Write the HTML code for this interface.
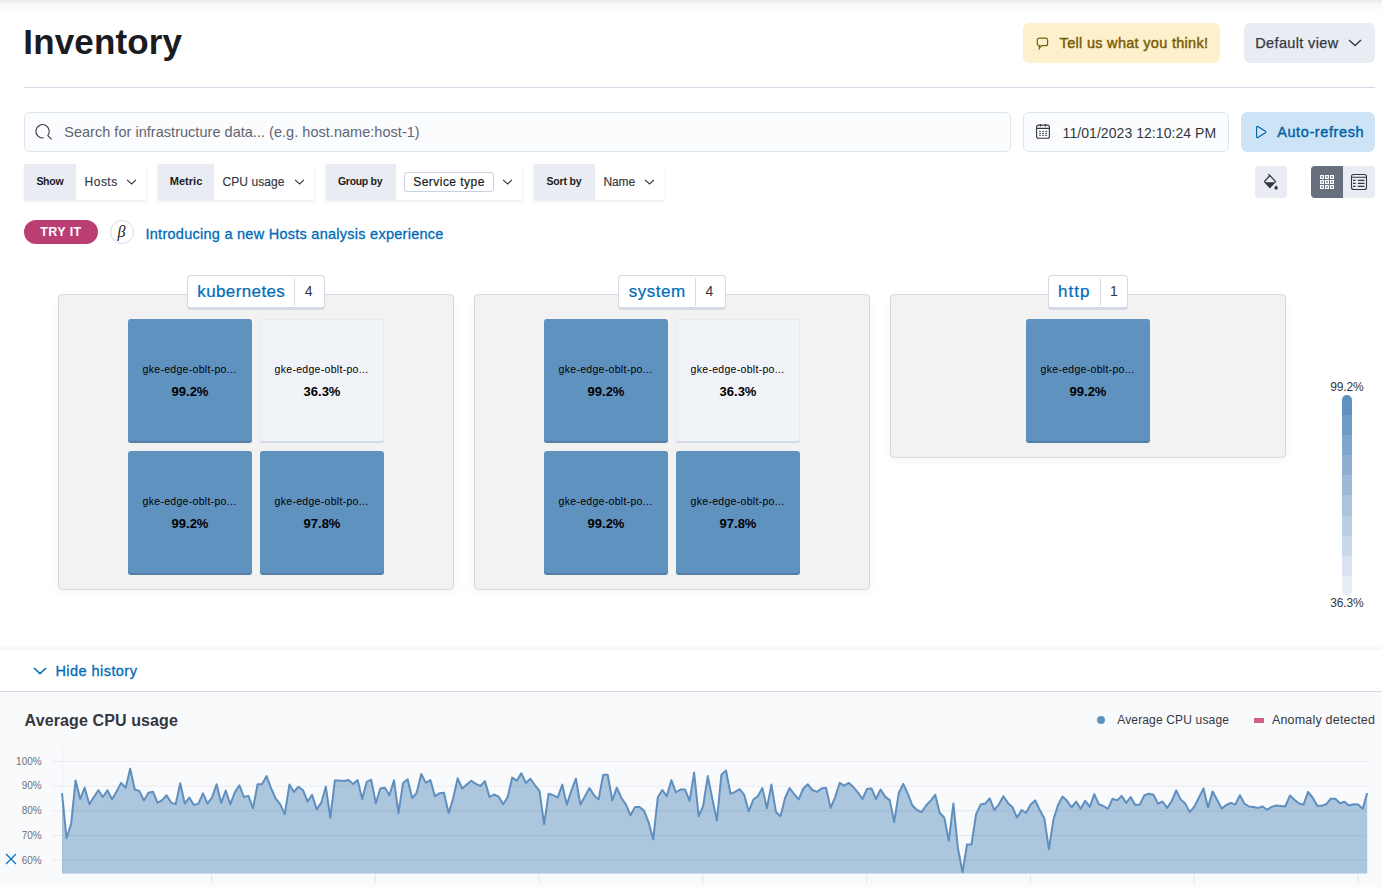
<!DOCTYPE html>
<html><head><meta charset="utf-8">
<style>
*{box-sizing:border-box;margin:0;padding:0}
html,body{width:1382px;height:887px;overflow:hidden;background:#fff;font-family:"Liberation Sans",sans-serif;color:#343741}
.a{position:absolute}
.t{position:absolute;white-space:nowrap;line-height:1}
svg{position:absolute;overflow:visible}
.fg{position:absolute;top:164px;height:36px;background:#fff;box-shadow:0 1px 2px rgba(120,130,160,0.14),0 2px 5px rgba(120,130,160,0.06)}
.fg .lab{position:absolute;left:0;top:0;height:36px;background:#E9EDF3}
.grp{position:absolute;top:294px;width:396px;background:#F2F2F2;border:1px solid #D3DAE6;border-radius:4px;box-shadow:0 3px 10px rgba(0,0,0,0.045)}
.gl{position:absolute;top:275px;height:35px;background:#fff;border:1px solid #D3DAE6;border-bottom:3px solid #D3DAE6;border-radius:4px}
.gl .dv{position:absolute;top:2px;width:1px;height:28px;background:#D3DAE6}
.tile{position:absolute;width:124px;height:124px;background:#6092C0;border-radius:3px;box-shadow:inset 0 -2px 0 rgba(0,0,0,0.13)}
.tile.l{background:#F0F3F8;box-shadow:inset 0 0 0 1px rgba(211,218,230,0.35),inset 0 -2px 0 #D3DCE8}
</style></head><body>
<div class="a" style="left:0;top:0;width:1382px;height:13px;background:linear-gradient(#E9E9E9 0px,#F4F4F4 2.5px,#F9F9F9 5px,#FCFCFC 8px,#FFFFFF 13px)"></div>
<div class="a" style="left:24px;top:87px;width:1351px;height:1px;background:#D3DAE6"></div>

<!-- Tell us -->
<div class="a" style="left:1023px;top:23px;width:197px;height:40px;background:#FDF1CD;border-radius:6px"></div>
<svg style="left:1036px;top:37px" width="14" height="13" viewBox="0 0 14 13"><path d="M3.2 1.1h6.4a2 2 0 0 1 2 2v3.6a2 2 0 0 1-2 2H5.3L3.3 11.6V8.7a2 2 0 0 1-2-2V3.1a2 2 0 0 1 2-2z" fill="none" stroke="#7C5E05" stroke-width="1.2"/></svg>

<!-- Default view -->
<div class="a" style="left:1244px;top:23px;width:131px;height:40px;background:#E9EDF3;border-radius:6px"></div>
<svg style="left:1348px;top:39px" width="14" height="8" viewBox="0 0 14 8"><path d="M1 1l6 5.6L13 1" fill="none" stroke="#343741" stroke-width="1.3"/></svg>

<!-- search -->
<div class="a" style="left:24px;top:112px;width:987px;height:40px;background:#FBFCFD;border:1px solid #DFE4EE;border-radius:6px"></div>
<svg style="left:35px;top:123px" width="18" height="18" viewBox="0 0 18 18"><path d="M8.6 14.9A6.7 6.7 0 1 1 12.7 12.6" fill="none" stroke="#343741" stroke-width="1.1"/><path d="M12.6 12.4l4 4" fill="none" stroke="#343741" stroke-width="1.1"/></svg>

<!-- date -->
<div class="a" style="left:1023px;top:112px;width:206px;height:40px;background:#FBFCFD;border:1px solid #DFE4EE;border-radius:6px"></div>
<svg style="left:1036px;top:123px" width="14" height="16" viewBox="0 0 14 16"><rect x="0.6" y="2.1" width="12.8" height="13.2" rx="2" fill="none" stroke="#343741" stroke-width="1.1"/><path d="M0.6 5.4h12.8M4.4 1v2.6M9.5 1v2.6" stroke="#343741" stroke-width="1.1"/><g fill="#343741"><rect x="3.2" y="7.9" width="1.6" height="1"/><rect x="6.2" y="7.9" width="1.6" height="1"/><rect x="9.2" y="7.9" width="1.6" height="1"/><rect x="3.2" y="9.9" width="1.6" height="1"/><rect x="6.2" y="9.9" width="1.6" height="1"/><rect x="9.2" y="9.9" width="1.6" height="1"/><rect x="3.2" y="11.9" width="1.6" height="1"/><rect x="6.2" y="11.9" width="1.6" height="1"/><rect x="9.2" y="11.9" width="1.6" height="1"/></g></svg>

<!-- auto refresh -->
<div class="a" style="left:1241px;top:112px;width:134px;height:40px;background:#CCE4F5;border-radius:6px"></div>
<svg style="left:1255px;top:125px" width="12" height="14" viewBox="0 0 12 14"><path d="M1.6 2.2v9.6a0.8 0.8 0 0 0 1.2 0.7l7.6-4.8a0.8 0.8 0 0 0 0-1.4L2.8 1.5a0.8 0.8 0 0 0-1.2 0.7z" fill="none" stroke="#0061A6" stroke-width="1.1"/></svg>

<!-- filter groups -->
<div class="fg" style="left:24px;width:122px"><div class="lab" style="width:52px"></div></div>
<svg style="left:126px;top:179px" width="11" height="6" viewBox="0 0 11 6"><path d="M1 0.8l4.6 4.2L10 0.8" fill="none" stroke="#343741" stroke-width="1.1"/></svg>
<div class="fg" style="left:158px;width:156px"><div class="lab" style="width:56px"></div></div>
<svg style="left:294px;top:179px" width="11" height="6" viewBox="0 0 11 6"><path d="M1 0.8l4.6 4.2L10 0.8" fill="none" stroke="#343741" stroke-width="1.1"/></svg>
<div class="fg" style="left:326px;width:196px"><div class="lab" style="width:70px"></div></div>
<div class="a" style="left:404px;top:172px;width:90px;height:20px;border:1px solid #C9D1E0;border-radius:3px;background:#fff"></div>
<svg style="left:502px;top:179px" width="11" height="6" viewBox="0 0 11 6"><path d="M1 0.8l4.6 4.2L10 0.8" fill="none" stroke="#343741" stroke-width="1.1"/></svg>
<div class="fg" style="left:534px;width:130px"><div class="lab" style="width:61px"></div></div>
<svg style="left:644px;top:179px" width="11" height="6" viewBox="0 0 11 6"><path d="M1 0.8l4.6 4.2L10 0.8" fill="none" stroke="#343741" stroke-width="1.1"/></svg>

<!-- paint & toggle -->
<div class="a" style="left:1255px;top:166px;width:32px;height:32px;background:#E9EDF3;border-radius:4px"></div>
<svg style="left:1255px;top:166px" width="32" height="32" viewBox="0 0 32 32"><path d="M13.3 8.2l1.5 1.5" stroke="#343741" stroke-width="1.2"/><path d="M14.8 9.5L9.4 15.6 14.9 21.6 20.6 15.6z" fill="none" stroke="#343741" stroke-width="1.2"/><path d="M9.6 16.2h10.6L14.9 21.6z" fill="#343741"/><path d="M21.1 19.2C20.3 20.3 19.4 21 19.4 22a1.7 1.7 0 0 0 3.4 0c0-1-0.9-1.7-1.7-2.8z" fill="#343741"/></svg>
<div class="a" style="left:1311px;top:166px;width:64px;height:32px;background:#E9EDF3;border-radius:4px;overflow:hidden"><div class="a" style="left:0;top:0;width:32px;height:32px;background:#69707D"></div></div>
<svg style="left:1311px;top:166px" width="32" height="32" viewBox="0 0 32 32"><rect x="9" y="9" width="4" height="4" fill="#fff"/><rect x="10.2" y="10.2" width="1.6" height="1.6" fill="#69707D"/><rect x="14" y="9" width="4" height="4" fill="#fff"/><rect x="15.2" y="10.2" width="1.6" height="1.6" fill="#69707D"/><rect x="19" y="9" width="4" height="4" fill="#fff"/><rect x="20.2" y="10.2" width="1.6" height="1.6" fill="#69707D"/><rect x="9" y="14" width="4" height="4" fill="#fff"/><rect x="10.2" y="15.2" width="1.6" height="1.6" fill="#69707D"/><rect x="14" y="14" width="4" height="4" fill="#fff"/><rect x="15.2" y="15.2" width="1.6" height="1.6" fill="#69707D"/><rect x="19" y="14" width="4" height="4" fill="#fff"/><rect x="20.2" y="15.2" width="1.6" height="1.6" fill="#69707D"/><rect x="9" y="19" width="4" height="4" fill="#fff"/><rect x="10.2" y="20.2" width="1.6" height="1.6" fill="#69707D"/><rect x="14" y="19" width="4" height="4" fill="#fff"/><rect x="15.2" y="20.2" width="1.6" height="1.6" fill="#69707D"/><rect x="19" y="19" width="4" height="4" fill="#fff"/><rect x="20.2" y="20.2" width="1.6" height="1.6" fill="#69707D"/></svg>
<svg style="left:1350px;top:173px" width="18" height="18" viewBox="0 0 18 18"><rect x="1.5" y="1.5" width="15" height="15" rx="2" fill="none" stroke="#343741" stroke-width="1.1"/><path d="M1.5 4.3h15M3 7.4h2.6M7.8 7.4h6.7M3 10.4h2.6M7.8 10.4h6.7M3 13.4h2.6M7.8 13.4h6.7" stroke="#343741" stroke-width="1.1"/></svg>

<!-- try it -->
<div class="a" style="left:24px;top:220px;width:74px;height:24px;background:#BB3E72;border-radius:12px"></div>
<div class="a" style="left:110px;top:220px;width:24px;height:24px;border:1px solid #D3DAE6;border-radius:12px"></div>
<div class="t" style="left:117.5px;top:223.5px;font-size:16px;font-style:italic;color:#1A1C21;font-family:'Liberation Serif',serif">&#946;</div>

<!-- groups -->
<div class="grp" style="left:58px;height:296px"></div>
<div class="grp" style="left:474px;height:296px"></div>
<div class="grp" style="left:890px;height:164px"></div>
<div class="gl" style="left:187px;width:138px"><div class="dv" style="left:106px"></div></div>
<div class="gl" style="left:618px;width:108px"><div class="dv" style="left:76px"></div></div>
<div class="gl" style="left:1048px;width:80px"><div class="dv" style="left:51px"></div></div>
<div class="tile" style="left:128px;top:319px"></div><div class="t" style="left:128px;width:124px;text-align:center;top:363.9px;font-size:10.5px;letter-spacing:0.3px;text-indent:-1px;color:#000">gke-edge-oblt-po...</div><div class="t" style="left:128px;width:124px;text-align:center;top:384.9px;font-size:13px;font-weight:bold;color:#000">99.2%</div><div class="tile l" style="left:260px;top:319px"></div><div class="t" style="left:260px;width:124px;text-align:center;top:363.9px;font-size:10.5px;letter-spacing:0.3px;text-indent:-1px;color:#000">gke-edge-oblt-po...</div><div class="t" style="left:260px;width:124px;text-align:center;top:384.9px;font-size:13px;font-weight:bold;color:#000">36.3%</div><div class="tile" style="left:128px;top:451px"></div><div class="t" style="left:128px;width:124px;text-align:center;top:495.9px;font-size:10.5px;letter-spacing:0.3px;text-indent:-1px;color:#000">gke-edge-oblt-po...</div><div class="t" style="left:128px;width:124px;text-align:center;top:517.0px;font-size:13px;font-weight:bold;color:#000">99.2%</div><div class="tile" style="left:260px;top:451px"></div><div class="t" style="left:260px;width:124px;text-align:center;top:495.9px;font-size:10.5px;letter-spacing:0.3px;text-indent:-1px;color:#000">gke-edge-oblt-po...</div><div class="t" style="left:260px;width:124px;text-align:center;top:517.0px;font-size:13px;font-weight:bold;color:#000">97.8%</div><div class="tile" style="left:544px;top:319px"></div><div class="t" style="left:544px;width:124px;text-align:center;top:363.9px;font-size:10.5px;letter-spacing:0.3px;text-indent:-1px;color:#000">gke-edge-oblt-po...</div><div class="t" style="left:544px;width:124px;text-align:center;top:384.9px;font-size:13px;font-weight:bold;color:#000">99.2%</div><div class="tile l" style="left:676px;top:319px"></div><div class="t" style="left:676px;width:124px;text-align:center;top:363.9px;font-size:10.5px;letter-spacing:0.3px;text-indent:-1px;color:#000">gke-edge-oblt-po...</div><div class="t" style="left:676px;width:124px;text-align:center;top:384.9px;font-size:13px;font-weight:bold;color:#000">36.3%</div><div class="tile" style="left:544px;top:451px"></div><div class="t" style="left:544px;width:124px;text-align:center;top:495.9px;font-size:10.5px;letter-spacing:0.3px;text-indent:-1px;color:#000">gke-edge-oblt-po...</div><div class="t" style="left:544px;width:124px;text-align:center;top:517.0px;font-size:13px;font-weight:bold;color:#000">99.2%</div><div class="tile" style="left:676px;top:451px"></div><div class="t" style="left:676px;width:124px;text-align:center;top:495.9px;font-size:10.5px;letter-spacing:0.3px;text-indent:-1px;color:#000">gke-edge-oblt-po...</div><div class="t" style="left:676px;width:124px;text-align:center;top:517.0px;font-size:13px;font-weight:bold;color:#000">97.8%</div><div class="tile" style="left:1026px;top:319px"></div><div class="t" style="left:1026px;width:124px;text-align:center;top:363.9px;font-size:10.5px;letter-spacing:0.3px;text-indent:-1px;color:#000">gke-edge-oblt-po...</div><div class="t" style="left:1026px;width:124px;text-align:center;top:384.9px;font-size:13px;font-weight:bold;color:#000">99.2%</div>

<!-- legend -->
<div class="a" style="left:1342px;top:395px;width:10px;height:201px;border-radius:5px;overflow:hidden">
<div style="height:20.1px;background:#6092C0"></div><div style="height:20.1px;background:#6F9CC6"></div><div style="height:20.1px;background:#7EA6CC"></div><div style="height:20.1px;background:#8DB0D2"></div><div style="height:20.1px;background:#9CBAD8"></div><div style="height:20.1px;background:#ABC4DE"></div><div style="height:20.1px;background:#BACEE4"></div><div style="height:20.1px;background:#C9D8EA"></div><div style="height:20.1px;background:#D8E2F0"></div><div style="height:20.1px;background:#E7ECF5"></div>
</div>

<!-- bottom drawer -->
<div class="a" style="left:0;top:645px;width:1382px;height:6px;background:linear-gradient(rgba(0,0,0,0),rgba(0,0,0,0.055))"></div>
<div class="a" style="left:0;top:650px;width:1382px;height:41px;background:#fff"></div>
<svg style="left:33px;top:667px" width="14" height="8" viewBox="0 0 14 8"><path d="M1 1l6 5.6L13 1" fill="none" stroke="#006BB8" stroke-width="1.5"/></svg>
<div class="a" style="left:0;top:691px;width:1382px;height:196px;background:#F9FAFC;border-top:1px solid #D3DAE6"></div>
<svg style="left:1097px;top:716px" width="8" height="8"><circle cx="4" cy="4" r="4" fill="#6092C0"/></svg>
<div class="a" style="left:1254px;top:718px;width:10px;height:5px;background:#D36086"></div>
<svg id="chart" style="left:0;top:0" width="1382" height="887" viewBox="0 0 1382 887">
<rect x="62" y="745" width="1" height="129" fill="#EDEFF2"/>
<rect x="52" y="760.9" width="1315" height="1" fill="#E9ECF1"/>
<rect x="52" y="785.6" width="1315" height="1" fill="#E9ECF1"/>
<rect x="52" y="810.3" width="1315" height="1" fill="#E9ECF1"/>
<rect x="52" y="835.0" width="1315" height="1" fill="#E9ECF1"/>
<rect x="52" y="859.7" width="1315" height="1" fill="#E9ECF1"/>
<path d="M62.0 793.1 L66.5 838.2 L71.1 824.1 L75.6 780.4 L80.2 799.0 L84.7 787.7 L89.3 804.3 L93.8 797.0 L98.4 790.2 L102.9 797.0 L107.5 790.2 L112.0 799.4 L116.6 791.4 L121.1 782.9 L125.7 787.7 L130.2 768.7 L134.8 789.5 L139.3 790.9 L143.9 800.4 L148.4 792.8 L153.0 791.7 L157.5 802.9 L162.1 800.1 L166.6 795.2 L171.1 802.6 L175.7 804.1 L180.2 783.2 L184.8 803.6 L189.3 797.6 L193.9 805.0 L198.4 803.6 L203.0 793.3 L207.5 803.6 L212.1 797.3 L216.6 784.3 L221.2 802.9 L225.7 790.5 L230.3 804.3 L234.8 792.4 L239.4 785.3 L243.9 797.0 L248.5 795.9 L253.0 808.3 L257.6 784.3 L262.1 783.9 L266.6 776.1 L271.2 788.5 L275.7 798.7 L280.3 804.3 L284.8 814.2 L289.4 784.6 L293.9 791.9 L298.5 786.7 L303.0 790.2 L307.6 801.5 L312.1 794.8 L316.7 809.3 L321.2 802.9 L325.8 786.7 L330.3 817.7 L334.9 780.4 L339.4 780.4 L344.0 781.1 L348.5 780.1 L353.1 783.9 L357.6 780.1 L362.2 799.0 L366.7 781.8 L371.2 779.7 L375.8 803.2 L380.3 788.5 L384.9 787.7 L389.4 795.2 L394.0 780.4 L398.5 813.1 L403.1 782.9 L407.6 779.2 L412.2 798.0 L416.7 792.8 L421.3 774.0 L425.8 782.9 L430.4 780.1 L434.9 796.2 L439.5 793.3 L444.0 792.8 L448.6 813.1 L453.1 798.7 L457.7 778.3 L462.2 788.5 L466.7 784.6 L471.3 780.7 L475.8 783.9 L480.4 786.0 L484.9 781.1 L489.5 797.0 L494.0 794.5 L498.6 796.6 L503.1 804.3 L507.7 797.0 L512.2 777.6 L516.8 780.7 L521.3 773.3 L525.9 782.9 L530.4 778.7 L535.0 785.3 L539.5 790.9 L544.1 824.1 L548.6 793.8 L553.2 795.2 L557.7 797.6 L562.3 784.6 L566.8 804.6 L571.3 790.9 L575.9 778.7 L580.4 804.6 L585.0 796.2 L589.5 788.1 L594.1 795.2 L598.6 799.4 L603.2 774.7 L607.7 774.7 L612.3 800.4 L616.8 787.7 L621.4 798.0 L625.9 804.3 L630.5 815.3 L635.0 806.9 L639.6 806.9 L644.1 810.7 L648.7 822.7 L653.2 839.6 L657.8 797.3 L662.3 790.0 L666.8 796.2 L671.4 780.1 L675.9 792.4 L680.5 789.5 L685.0 789.5 L689.6 800.8 L694.1 772.6 L698.7 816.3 L703.2 805.7 L707.8 776.1 L712.3 798.7 L716.9 820.5 L721.4 774.7 L726.0 770.5 L730.5 793.8 L735.1 791.9 L739.6 789.1 L744.2 794.8 L748.7 811.4 L753.3 799.8 L757.8 796.2 L762.4 788.1 L766.9 808.3 L771.4 784.6 L776.0 812.1 L780.5 816.3 L785.1 798.0 L789.6 788.1 L794.2 794.2 L798.7 799.4 L803.3 788.5 L807.8 784.3 L812.4 790.0 L816.9 791.9 L821.5 788.5 L826.0 787.7 L830.6 807.9 L835.1 797.3 L839.7 782.9 L844.2 785.7 L848.8 782.9 L853.3 787.1 L857.9 792.4 L862.4 799.0 L866.9 789.1 L871.5 788.5 L876.0 799.0 L880.6 789.5 L885.1 796.6 L889.7 800.1 L894.2 822.0 L898.8 792.8 L903.3 783.9 L907.9 793.8 L912.4 805.5 L917.0 810.0 L921.5 812.1 L926.1 805.5 L930.6 800.8 L935.2 794.8 L939.7 812.8 L944.3 817.7 L948.8 840.7 L953.4 803.6 L957.9 848.0 L962.5 872.3 L967.0 844.5 L971.5 844.5 L976.1 814.2 L980.6 804.6 L985.2 803.6 L989.7 798.4 L994.3 810.0 L998.8 804.6 L1003.4 796.2 L1007.9 802.9 L1012.5 807.2 L1017.0 817.7 L1021.6 810.0 L1026.1 812.8 L1030.7 804.6 L1035.2 800.4 L1039.8 810.0 L1044.3 818.2 L1048.9 849.2 L1053.4 819.8 L1058.0 805.0 L1062.5 796.6 L1067.0 800.8 L1071.6 807.4 L1076.1 801.5 L1080.7 808.8 L1085.2 800.8 L1089.8 806.9 L1094.3 794.2 L1098.9 804.3 L1103.4 806.0 L1108.0 808.8 L1112.5 798.7 L1117.1 800.4 L1121.6 795.9 L1126.2 802.9 L1130.7 797.0 L1135.3 805.0 L1139.8 804.6 L1144.4 795.2 L1148.9 793.8 L1153.5 794.8 L1158.0 803.6 L1162.6 801.5 L1167.1 807.9 L1171.6 801.2 L1176.2 790.5 L1180.7 799.4 L1185.3 803.6 L1189.8 812.1 L1194.4 806.5 L1198.9 797.6 L1203.5 788.5 L1208.0 807.4 L1212.6 791.4 L1217.1 799.8 L1221.7 808.6 L1226.2 805.0 L1230.8 802.9 L1235.3 804.6 L1239.9 795.2 L1244.4 803.6 L1249.0 806.5 L1253.5 806.9 L1258.1 807.9 L1262.6 806.5 L1267.1 809.7 L1271.7 806.9 L1276.2 805.5 L1280.8 806.0 L1285.3 806.5 L1289.9 795.6 L1294.4 799.8 L1299.0 803.6 L1303.5 804.6 L1308.1 791.9 L1312.6 797.6 L1317.2 805.7 L1321.7 805.7 L1326.3 804.1 L1330.8 798.7 L1335.4 798.7 L1339.9 803.2 L1344.5 801.8 L1349.0 805.5 L1353.6 804.3 L1358.1 804.6 L1362.7 808.8 L1367.2 793.1 L1367.2 873.4 L62 873.4Z" fill="#6092C0" fill-opacity="0.5"/>
<rect x="62" y="810.3" width="1305" height="1" fill="#6092C0" fill-opacity="0.06"/>
<rect x="62" y="835.0" width="1305" height="1" fill="#6092C0" fill-opacity="0.06"/>
<rect x="62" y="859.7" width="1305" height="1" fill="#6092C0" fill-opacity="0.06"/>
<path d="M62.0 793.1 L66.5 838.2 L71.1 824.1 L75.6 780.4 L80.2 799.0 L84.7 787.7 L89.3 804.3 L93.8 797.0 L98.4 790.2 L102.9 797.0 L107.5 790.2 L112.0 799.4 L116.6 791.4 L121.1 782.9 L125.7 787.7 L130.2 768.7 L134.8 789.5 L139.3 790.9 L143.9 800.4 L148.4 792.8 L153.0 791.7 L157.5 802.9 L162.1 800.1 L166.6 795.2 L171.1 802.6 L175.7 804.1 L180.2 783.2 L184.8 803.6 L189.3 797.6 L193.9 805.0 L198.4 803.6 L203.0 793.3 L207.5 803.6 L212.1 797.3 L216.6 784.3 L221.2 802.9 L225.7 790.5 L230.3 804.3 L234.8 792.4 L239.4 785.3 L243.9 797.0 L248.5 795.9 L253.0 808.3 L257.6 784.3 L262.1 783.9 L266.6 776.1 L271.2 788.5 L275.7 798.7 L280.3 804.3 L284.8 814.2 L289.4 784.6 L293.9 791.9 L298.5 786.7 L303.0 790.2 L307.6 801.5 L312.1 794.8 L316.7 809.3 L321.2 802.9 L325.8 786.7 L330.3 817.7 L334.9 780.4 L339.4 780.4 L344.0 781.1 L348.5 780.1 L353.1 783.9 L357.6 780.1 L362.2 799.0 L366.7 781.8 L371.2 779.7 L375.8 803.2 L380.3 788.5 L384.9 787.7 L389.4 795.2 L394.0 780.4 L398.5 813.1 L403.1 782.9 L407.6 779.2 L412.2 798.0 L416.7 792.8 L421.3 774.0 L425.8 782.9 L430.4 780.1 L434.9 796.2 L439.5 793.3 L444.0 792.8 L448.6 813.1 L453.1 798.7 L457.7 778.3 L462.2 788.5 L466.7 784.6 L471.3 780.7 L475.8 783.9 L480.4 786.0 L484.9 781.1 L489.5 797.0 L494.0 794.5 L498.6 796.6 L503.1 804.3 L507.7 797.0 L512.2 777.6 L516.8 780.7 L521.3 773.3 L525.9 782.9 L530.4 778.7 L535.0 785.3 L539.5 790.9 L544.1 824.1 L548.6 793.8 L553.2 795.2 L557.7 797.6 L562.3 784.6 L566.8 804.6 L571.3 790.9 L575.9 778.7 L580.4 804.6 L585.0 796.2 L589.5 788.1 L594.1 795.2 L598.6 799.4 L603.2 774.7 L607.7 774.7 L612.3 800.4 L616.8 787.7 L621.4 798.0 L625.9 804.3 L630.5 815.3 L635.0 806.9 L639.6 806.9 L644.1 810.7 L648.7 822.7 L653.2 839.6 L657.8 797.3 L662.3 790.0 L666.8 796.2 L671.4 780.1 L675.9 792.4 L680.5 789.5 L685.0 789.5 L689.6 800.8 L694.1 772.6 L698.7 816.3 L703.2 805.7 L707.8 776.1 L712.3 798.7 L716.9 820.5 L721.4 774.7 L726.0 770.5 L730.5 793.8 L735.1 791.9 L739.6 789.1 L744.2 794.8 L748.7 811.4 L753.3 799.8 L757.8 796.2 L762.4 788.1 L766.9 808.3 L771.4 784.6 L776.0 812.1 L780.5 816.3 L785.1 798.0 L789.6 788.1 L794.2 794.2 L798.7 799.4 L803.3 788.5 L807.8 784.3 L812.4 790.0 L816.9 791.9 L821.5 788.5 L826.0 787.7 L830.6 807.9 L835.1 797.3 L839.7 782.9 L844.2 785.7 L848.8 782.9 L853.3 787.1 L857.9 792.4 L862.4 799.0 L866.9 789.1 L871.5 788.5 L876.0 799.0 L880.6 789.5 L885.1 796.6 L889.7 800.1 L894.2 822.0 L898.8 792.8 L903.3 783.9 L907.9 793.8 L912.4 805.5 L917.0 810.0 L921.5 812.1 L926.1 805.5 L930.6 800.8 L935.2 794.8 L939.7 812.8 L944.3 817.7 L948.8 840.7 L953.4 803.6 L957.9 848.0 L962.5 872.3 L967.0 844.5 L971.5 844.5 L976.1 814.2 L980.6 804.6 L985.2 803.6 L989.7 798.4 L994.3 810.0 L998.8 804.6 L1003.4 796.2 L1007.9 802.9 L1012.5 807.2 L1017.0 817.7 L1021.6 810.0 L1026.1 812.8 L1030.7 804.6 L1035.2 800.4 L1039.8 810.0 L1044.3 818.2 L1048.9 849.2 L1053.4 819.8 L1058.0 805.0 L1062.5 796.6 L1067.0 800.8 L1071.6 807.4 L1076.1 801.5 L1080.7 808.8 L1085.2 800.8 L1089.8 806.9 L1094.3 794.2 L1098.9 804.3 L1103.4 806.0 L1108.0 808.8 L1112.5 798.7 L1117.1 800.4 L1121.6 795.9 L1126.2 802.9 L1130.7 797.0 L1135.3 805.0 L1139.8 804.6 L1144.4 795.2 L1148.9 793.8 L1153.5 794.8 L1158.0 803.6 L1162.6 801.5 L1167.1 807.9 L1171.6 801.2 L1176.2 790.5 L1180.7 799.4 L1185.3 803.6 L1189.8 812.1 L1194.4 806.5 L1198.9 797.6 L1203.5 788.5 L1208.0 807.4 L1212.6 791.4 L1217.1 799.8 L1221.7 808.6 L1226.2 805.0 L1230.8 802.9 L1235.3 804.6 L1239.9 795.2 L1244.4 803.6 L1249.0 806.5 L1253.5 806.9 L1258.1 807.9 L1262.6 806.5 L1267.1 809.7 L1271.7 806.9 L1276.2 805.5 L1280.8 806.0 L1285.3 806.5 L1289.9 795.6 L1294.4 799.8 L1299.0 803.6 L1303.5 804.6 L1308.1 791.9 L1312.6 797.6 L1317.2 805.7 L1321.7 805.7 L1326.3 804.1 L1330.8 798.7 L1335.4 798.7 L1339.9 803.2 L1344.5 801.8 L1349.0 805.5 L1353.6 804.3 L1358.1 804.6 L1362.7 808.8 L1367.2 793.1" fill="none" stroke="#5F8FBE" stroke-width="2" stroke-linejoin="round"/>
<rect x="211.0" y="874" width="1" height="9" fill="#E3E6EB"/>
<rect x="374.8" y="874" width="1" height="9" fill="#E3E6EB"/>
<rect x="538.6" y="874" width="1" height="9" fill="#E3E6EB"/>
<rect x="702.4" y="874" width="1" height="9" fill="#E3E6EB"/>
<rect x="866.2" y="874" width="1" height="9" fill="#E3E6EB"/>
<rect x="1030.0" y="874" width="1" height="9" fill="#E3E6EB"/>
<rect x="1193.8" y="874" width="1" height="9" fill="#E3E6EB"/>
<rect x="1357.6" y="874" width="1" height="9" fill="#E3E6EB"/>
</svg>
<svg style="left:5px;top:853px" width="12" height="12" viewBox="0 0 12 12"><path d="M1 1l10 10M11 1L1 11" stroke="#006BB8" stroke-width="1.2"/></svg>
<div class="t" style="left:23.3px;top:23.9px;font-size:35px;font-weight:bold;color:#1A1C21;letter-spacing:0.15px;">Inventory</div>
<div class="t" style="left:1059.6px;top:35.7px;font-size:14.5px;font-weight:normal;color:#7A5D08;letter-spacing:0.3px;-webkit-text-stroke:0.45px #7A5D08">Tell us what you think!</div>
<div class="t" style="left:1255.3px;top:36.0px;font-size:14.5px;font-weight:normal;color:#343741;letter-spacing:0.35px;-webkit-text-stroke:0.25px #343741">Default view</div>
<div class="t" style="left:64.2px;top:125.3px;font-size:14.5px;font-weight:normal;color:#5F6572;letter-spacing:0.03px;">Search for infrastructure data... (e.g. host.name:host-1)</div>
<div class="t" style="left:1062.6px;top:126.1px;font-size:14px;font-weight:normal;color:#343741;letter-spacing:0.06px;">11/01/2023 12:10:24 PM</div>
<div class="t" style="left:1277.2px;top:124.7px;font-size:14.5px;font-weight:normal;color:#0061A6;letter-spacing:0.6px;-webkit-text-stroke:0.4px #0061A6">Auto-refresh</div>
<div class="t" style="left:36.4px;top:175.9px;font-size:10.5px;font-weight:bold;color:#1A1C21;letter-spacing:-0.27px;">Show</div>
<div class="t" style="left:84.6px;top:175.6px;font-size:12px;font-weight:normal;color:#343741;letter-spacing:0.48px;-webkit-text-stroke:0.15px #343741">Hosts</div>
<div class="t" style="left:169.7px;top:175.7px;font-size:11px;font-weight:bold;color:#1A1C21;letter-spacing:0.04px;">Metric</div>
<div class="t" style="left:222.5px;top:175.7px;font-size:12px;font-weight:normal;color:#343741;letter-spacing:0.06px;-webkit-text-stroke:0.15px #343741">CPU usage</div>
<div class="t" style="left:338.0px;top:175.9px;font-size:10.5px;font-weight:bold;color:#1A1C21;letter-spacing:-0.31px;">Group by</div>
<div class="t" style="left:413.2px;top:175.7px;font-size:12px;font-weight:normal;color:#1A1C21;letter-spacing:0.47px;-webkit-text-stroke:0.2px #1A1C21">Service type</div>
<div class="t" style="left:546.5px;top:176.0px;font-size:10.5px;font-weight:bold;color:#1A1C21;letter-spacing:-0.17px;">Sort by</div>
<div class="t" style="left:603.5px;top:175.7px;font-size:12px;font-weight:normal;color:#343741;letter-spacing:-0.11px;-webkit-text-stroke:0.15px #343741">Name</div>
<div class="t" style="left:40.3px;top:225.7px;font-size:12.5px;font-weight:bold;color:#FFFFFF;letter-spacing:0.4px;">TRY IT</div>
<div class="t" style="left:145.5px;top:226.7px;font-size:14.5px;font-weight:normal;color:#006BB8;letter-spacing:0.26px;-webkit-text-stroke:0.3px #006BB8">Introducing a new Hosts analysis experience</div>
<div class="t" style="left:197.3px;top:283.2px;font-size:17px;font-weight:normal;color:#006BB8;letter-spacing:0.38px;-webkit-text-stroke:0.2px #006BB8">kubernetes</div>
<div class="t" style="left:304.8px;top:284.2px;font-size:14px;font-weight:normal;color:#343741;letter-spacing:0px;">4</div>
<div class="t" style="left:628.8px;top:282.9px;font-size:17px;font-weight:normal;color:#006BB8;letter-spacing:0.5px;-webkit-text-stroke:0.2px #006BB8">system</div>
<div class="t" style="left:705.5px;top:284.2px;font-size:14px;font-weight:normal;color:#343741;letter-spacing:0px;">4</div>
<div class="t" style="left:1058.0px;top:282.9px;font-size:17px;font-weight:normal;color:#006BB8;letter-spacing:1.0px;-webkit-text-stroke:0.2px #006BB8">http</div>
<div class="t" style="left:1110.0px;top:284.2px;font-size:14px;font-weight:normal;color:#343741;letter-spacing:0px;">1</div>
<div class="t" style="left:1330.3px;top:380.9px;font-size:12px;font-weight:normal;color:#343741;letter-spacing:-0.16px;">99.2%</div>
<div class="t" style="left:1330.3px;top:596.6px;font-size:12px;font-weight:normal;color:#343741;letter-spacing:-0.16px;">36.3%</div>
<div class="t" style="left:55.4px;top:664.0px;font-size:14.5px;font-weight:normal;color:#006BB8;letter-spacing:0.45px;-webkit-text-stroke:0.3px #006BB8">Hide history</div>
<div class="t" style="left:24.6px;top:713.2px;font-size:16px;font-weight:bold;color:#343741;letter-spacing:0.11px;">Average CPU usage</div>
<div class="t" style="left:1117.2px;top:713.8px;font-size:12px;font-weight:normal;color:#343741;letter-spacing:0.16px;">Average CPU usage</div>
<div class="t" style="left:1271.9px;top:714.4px;font-size:12.5px;font-weight:normal;color:#343741;letter-spacing:0.2px;">Anomaly detected</div>
<div class="t" style="left:0px;width:41.7px;text-align:right;top:756.7px;font-size:10px;color:#69707D">100%</div>
<div class="t" style="left:0px;width:41.7px;text-align:right;top:781.4px;font-size:10px;color:#69707D">90%</div>
<div class="t" style="left:0px;width:41.7px;text-align:right;top:806.1px;font-size:10px;color:#69707D">80%</div>
<div class="t" style="left:0px;width:41.7px;text-align:right;top:830.8px;font-size:10px;color:#69707D">70%</div>
<div class="t" style="left:0px;width:41.7px;text-align:right;top:855.5px;font-size:10px;color:#69707D">60%</div>
</body></html>
